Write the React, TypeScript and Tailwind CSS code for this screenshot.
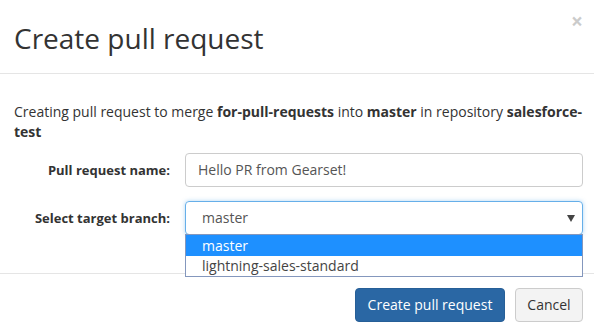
export default function App() {
  return (
    <div
      className="w-[594px] h-[335px] bg-white overflow-hidden text-[#333] text-[14px] leading-[20px]"
      style={{ fontFamily: '"Open Sans", "Liberation Sans", sans-serif' }}
    >
      <div className="relative h-[74px] border-b border-[#e5e5e5] pl-[14px] pt-[18px]">
        <h4 className="text-[28px] leading-[40px] font-normal text-[#333]">Create pull request</h4>
        <button className="absolute right-[11px] top-[11px] text-[21px] leading-[21px] font-bold text-[#000] opacity-20">
          ×
        </button>
      </div>

      <div className="h-[199px] pl-[14px] pr-[11px] pt-[28px]">
        <p className="w-[570px]">
          Creating pull request to merge <b>for-pull-requests</b> into <b>master</b> in repository{" "}
          <b>salesforce-test</b>
        </p>

        <div className="mt-[11px] flex items-center gap-[15px]">
          <label className="w-[156px] text-right font-bold text-[13px]">Pull request name:</label>
          <div className="w-[398px] h-[34px] border border-[#ccc] rounded-[4px] pl-[12px] flex items-center text-[#555]">
            Hello PR from Gearset!
          </div>
        </div>

        <div className="mt-[14px] flex items-center gap-[15px]">
          <label className="w-[156px] text-right font-bold text-[13px]">Select target branch:</label>
          <div className="relative w-[398px] h-[34px]">
            <div className="w-full h-full border border-[#66afe9] rounded-[4px] pl-[16px] pr-[8px] flex items-center justify-between text-[#555] shadow-[0_0_4px_rgba(102,175,233,0.5)]">
              <span>master</span>
              <svg width="8" height="7" viewBox="0 0 8 7" className="mr-[-1px]">
                <path d="M0 0h8L4 7z" fill="#444" />
              </svg>
            </div>
            <div className="absolute left-0 top-[33px] w-[398px] border border-[#8497bd] bg-white">
              <div className="h-[21px] bg-[#1e90ff] text-white pl-[16px] leading-[21px]">master</div>
              <div className="h-[20px] text-[#444] pl-[16px] leading-[20px]">lightning-sales-standard</div>
            </div>
          </div>
        </div>
      </div>

      <div className="border-t border-[#e5e5e5] pt-[14px] pr-[11px] flex justify-end gap-[10px]">
        <button className="w-[150px] h-[34px] rounded-[4px] bg-[#2a67a4] border border-[#275f97] text-white">
          Create pull request
        </button>
        <button className="w-[68px] h-[34px] rounded-[4px] bg-[#f3f3f3] border border-[#ccc] text-[#333]">
          Cancel
        </button>
      </div>
    </div>
  );
}
